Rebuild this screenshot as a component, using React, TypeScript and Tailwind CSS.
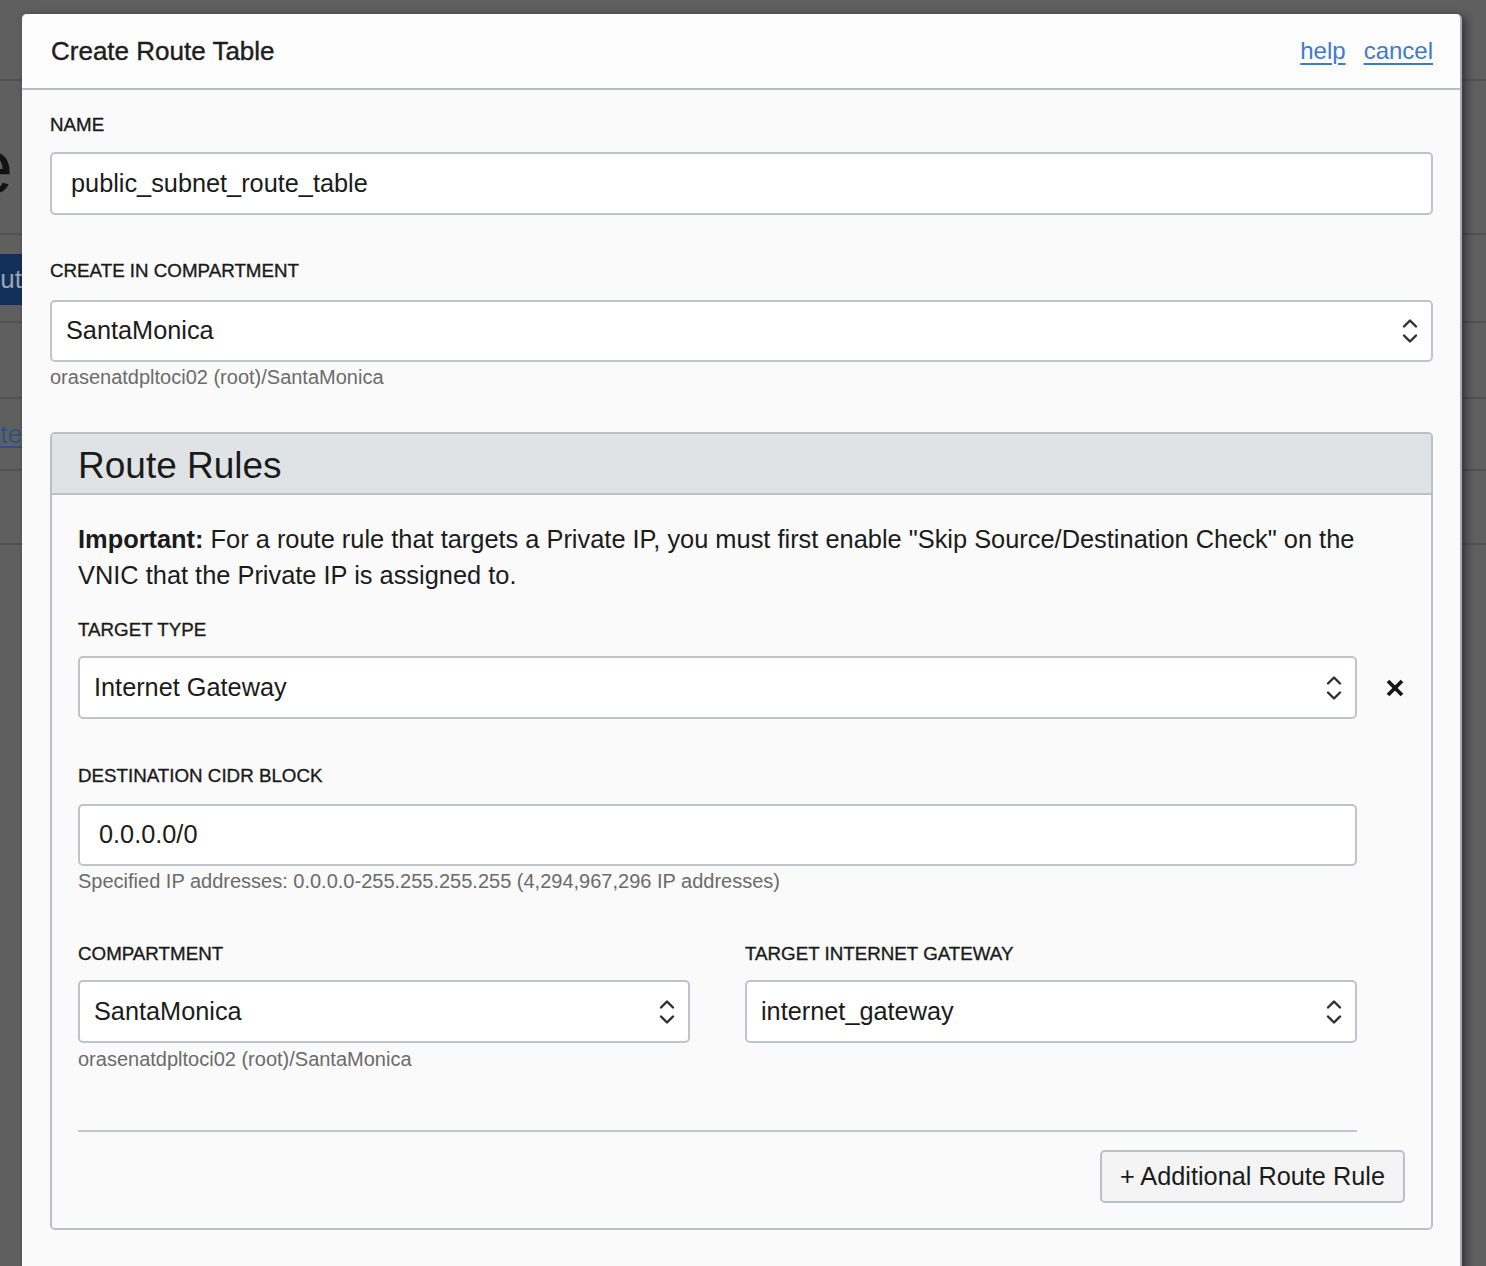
import React from "react";

function Chevrons() {
  return (
    <svg width="16" height="28" viewBox="0 0 16 28" fill="none" stroke="#2e2e2e" strokeWidth="2.4" strokeLinecap="round" strokeLinejoin="round">
      <path d="M2 9.5 L8 3.5 L14 9.5" />
      <path d="M2 18.5 L8 24.5 L14 18.5" />
    </svg>
  );
}

function CloseX() {
  return (
    <svg width="20" height="20" viewBox="0 0 20 20" fill="none" stroke="#161616" strokeWidth="3.8">
      <path d="M3 3 L17 17" />
      <path d="M17 3 L3 17" />
    </svg>
  );
}

function Label({ children }: { children: React.ReactNode }) {
  return (
    <div className="h-[22px] leading-[22px] text-[18.75px] text-[#1a1a1a] [-webkit-text-stroke:0.35px_#1a1a1a] uppercase whitespace-nowrap">
      {children}
    </div>
  );
}

function Hint({ children }: { children: React.ReactNode }) {
  return <div className="h-[24px] leading-[24px] text-[20px] text-[#6b6b6b] whitespace-nowrap">{children}</div>;
}

function Select({ value, h = "h-[63px]", w = "w-full", pl = "pl-[14px]" }: { value: string; h?: string; w?: string; pl?: string }) {
  return (
    <div className={`${h} ${w} ${pl} pr-[13px] flex items-center justify-between bg-white border-2 border-[#c0c4c8] rounded-[5px]`}>
      <span className="text-[25.3px] text-[#1b1b1b] whitespace-nowrap">{value}</span>
      <Chevrons />
    </div>
  );
}

function TextInput({ value, h = "h-[63px]", pl = "pl-[19px]" }: { value: string; h?: string; pl?: string }) {
  return (
    <div className={`${h} w-full ${pl} flex items-center bg-white border-2 border-[#c0c4c8] rounded-[5px]`}>
      <span className="text-[25.3px] text-[#1b1b1b] whitespace-nowrap">{value}</span>
    </div>
  );
}

export default function App() {
  return (
    <div className="relative h-[1266px] overflow-hidden bg-[#5f5f5f] font-['Liberation_Sans',Arial,sans-serif]">
      {/* underlying page, dimmed */}
      <div className="flex flex-col">
        <div className="h-[81px] border-b-2 border-[#505050]" />
        <div className="h-[154px] border-b-2 border-[#505050] flex">
          <div className="w-[13px] overflow-hidden flex justify-end pt-[46px]">
            <span className="text-[76px] leading-[80px] text-[#121212] whitespace-nowrap">Route Table</span>
          </div>
        </div>
        <div className="h-[88px] border-b-2 border-[#505050] pt-[19px]">
          <div className="w-[22px] h-[51px] bg-[#12305a] overflow-hidden flex justify-end items-center">
            <span className="text-[26px] text-[#9ea6b2] whitespace-nowrap">Layout</span>
          </div>
        </div>
        <div className="h-[76px] border-b-2 border-[#505050]" />
        <div className="h-[72px] border-b-2 border-[#505050] flex items-center">
          <div className="w-[22px] overflow-hidden flex justify-end">
            <span className="text-[26px] text-[#2b5484] underline underline-offset-[3px] whitespace-nowrap">Route</span>
          </div>
        </div>
        <div className="h-[74px] border-b-2 border-[#505050]" />
      </div>

      {/* modal */}
      <div className="absolute left-[22px] top-[14px] w-[1440px] rounded-t-[5px] bg-[#fafafa] border-r-2 border-[#a9adb1] shadow-[4px_2px_8px_rgba(0,0,0,0.45)]">
        <div className="h-[76px] bg-[#fdfdfd] rounded-t-[5px] border-b-2 border-[#babec2] flex items-center justify-between pl-[29px] pr-[27px]">
          <span className="text-[26px] text-[#1d1d1d] [-webkit-text-stroke:0.4px_#1d1d1d] whitespace-nowrap">Create Route Table</span>
          <div className="flex gap-[18px] text-[24px] text-[#3d7bca]">
            <span className="underline underline-offset-[4px] decoration-[1.5px]">help</span>
            <span className="underline underline-offset-[4px] decoration-[1.5px]">cancel</span>
          </div>
        </div>

        <div className="pl-[28px] pr-[27px] pt-[24px] pb-[120px]">
          <Label>Name</Label>
          <div className="mt-[16px]">
            <TextInput value="public_subnet_route_table" />
          </div>

          <div className="mt-[45px]">
            <Label>Create in Compartment</Label>
          </div>
          <div className="mt-[18px]">
            <Select value="SantaMonica" h="h-[62px]" />
          </div>
          <div className="mt-[3px]">
            <Hint>orasenatdpltoci02 (root)/SantaMonica</Hint>
          </div>

          {/* Route Rules panel */}
          <div className="mt-[43px] border-2 border-[#bcc0c4] rounded-[5px] overflow-hidden">
            <div className="h-[61px] bg-[#dfe3e6] border-b-2 border-[#bcc0c4] flex items-center pl-[26px] pt-[4px]">
              <span className="text-[37px] text-[#1b1b1b] whitespace-nowrap">Route Rules</span>
            </div>
            <div className="px-[26px] pt-[26px] pb-[25px] bg-[#fafafa]">
              <div className="text-[25.4px] leading-[36px] text-[#1b1b1b] whitespace-nowrap">
                <span className="font-bold">Important:</span> For a route rule that targets a Private IP, you must first enable "Skip Source/Destination Check" on the
                <br />
                VNIC that the Private IP is assigned to.
              </div>

              <div className="mt-[26px]">
                <Label>Target Type</Label>
              </div>
              <div className="mt-[15px] grid grid-cols-[1279px_1fr] items-center">
                <Select value="Internet Gateway" />
                <div className="flex justify-end">
                  <CloseX />
                </div>
              </div>

              <div className="mt-[46px]">
                <Label>Destination CIDR Block</Label>
              </div>
              <div className="mt-[17px] w-[1279px]">
                <TextInput value="0.0.0.0/0" h="h-[62px]" />
              </div>
              <div className="mt-[3px]">
                <Hint>Specified IP addresses: 0.0.0.0-255.255.255.255 (4,294,967,296 IP addresses)</Hint>
              </div>

              <div className="mt-[50px] w-[1279px] grid grid-cols-2 gap-x-[55px]">
                <div>
                  <Label>Compartment</Label>
                  <div className="mt-[15px]">
                    <Select value="SantaMonica" />
                  </div>
                  <div className="mt-[4px]">
                    <Hint>orasenatdpltoci02 (root)/SantaMonica</Hint>
                  </div>
                </div>
                <div>
                  <Label>Target Internet Gateway</Label>
                  <div className="mt-[15px]">
                    <Select value="internet_gateway" />
                  </div>
                </div>
              </div>

              <div className="mt-[59px] w-[1279px] h-[2px] bg-[#c3c7cb]" />

              <div className="mt-[18px] flex justify-end">
                <div className="h-[53px] px-[18px] flex items-center bg-[#f4f4f4] border-2 border-[#bcc0c4] rounded-[5px] text-[25.3px] text-[#1b1b1b] whitespace-nowrap">
                  + Additional Route Rule
                </div>
              </div>
            </div>
          </div>
        </div>
      </div>
    </div>
  );
}
